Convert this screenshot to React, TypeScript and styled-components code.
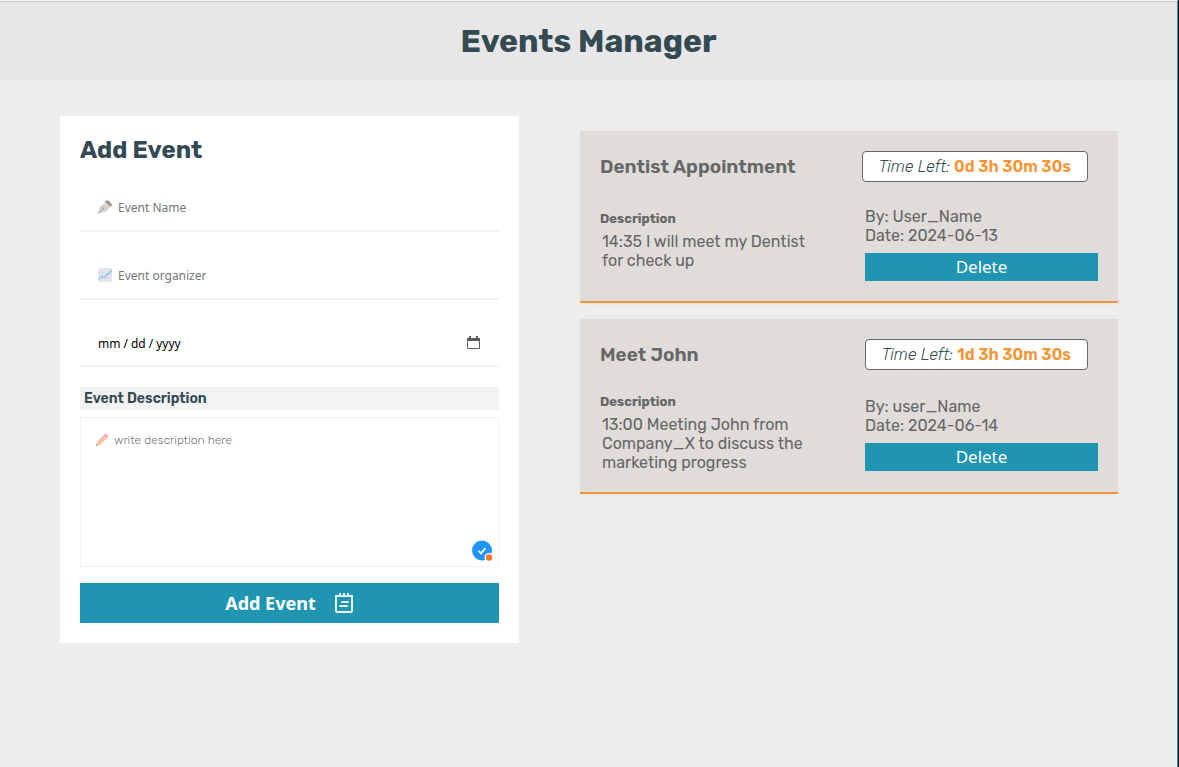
import React from "react";
import styled, { createGlobalStyle } from "styled-components";

const rubik = `Rubik, Inter, sans-serif`;
const noto = `"Noto Sans", sans-serif`;

const GlobalStyle = createGlobalStyle`
  *, *::before, *::after { box-sizing: border-box; }
  body {
    margin: 0;
    border-right: 1px solid #0c1216;
    background: #eee;
    font-family: ${rubik};
  }
  h1, h2, h3, h4, p { margin: 0; }
`;

const Page = styled.div`
  min-height: 100vh;
  border-top: 1px solid #fafafa;
  border-right: 1px solid #4b8ba0;
  background: #eee;
`;

const Header = styled.header`
  padding: 20px;
  border-top: 1px solid #c6c8c7;
  background: #e7e7e7;
  text-align: center;
`;

const PageTitle = styled.h1`
  color: #334a52;
  font-size: 32px;
  line-height: 38px;
  font-weight: 700;
`;

const Main = styled.main`
  display: grid;
  grid-template-columns: 459fr 538fr;
  gap: 61px;
  align-items: start;
  padding: 36px 59px 36px 60px;
`;

const FormCard = styled.form`
  display: flex;
  flex-direction: column;
  padding: 20px;
  background: #fff;
`;

const FormTitle = styled.h2`
  margin-bottom: 20px;
  color: #334a52;
  font-size: 24px;
  line-height: 28px;
  font-weight: 700;
`;

const Field = styled.label<{ $compact?: boolean }>`
  position: relative;
  display: flex;
  align-items: center;
  gap: 5px;
  height: ${(p) => (p.$compact ? 47 : 48)}px;
  margin-bottom: 20px;
  padding: 0 17px;
  border-bottom: 2px solid #f3f3f3;
`;

const TextInput = styled.input`
  flex: 1;
  min-width: 0;
  padding: 2px 0 0;
  border: 0;
  outline: 0;
  background: transparent;
  color: #000;
  font: 12px/18px ${noto};
  &::placeholder { color: #757575; opacity: 1; }
`;

const DateInput = styled(TextInput)`
  &::-webkit-datetime-edit-fields-wrapper { padding: 0; }
  &::-webkit-datetime-edit-text { padding: 0 2px; }
  &::-webkit-calendar-picker-indicator { opacity: 0; }
`;

const CalendarIcon = styled.svg`
  position: absolute;
  right: 18px;
  pointer-events: none;
`;

const DescriptionLabel = styled.label`
  margin-bottom: 7px;
  padding: 2px 4px;
  background: #f3f3f3;
  color: #334a52;
  font-size: 14px;
  line-height: 19px;
  font-weight: 600;
`;

const DescriptionBox = styled.div`
  position: relative;
  display: flex;
  align-items: flex-start;
  gap: 5px;
  height: 150px;
  margin-bottom: 16px;
  padding: 14px;
  border: 1px solid #f3f3f3;
`;

const PencilHolder = styled.span`
  display: flex;
  align-items: center;
  height: 16px;
`;

const TextArea = styled.textarea`
  flex: 1;
  align-self: stretch;
  padding: 0;
  border: 0;
  outline: 0;
  resize: none;
  background: transparent;
  font: 300 12px/16px ${rubik};
  &::placeholder { color: #757575; opacity: 1; }
`;

const CheckerBadge = styled.svg`
  position: absolute;
  right: 5px;
  bottom: 4px;
`;

const SubmitButton = styled.button`
  display: flex;
  align-items: center;
  justify-content: center;
  gap: 18px;
  height: 40px;
  border: 0;
  background: #2095b2;
  box-shadow: 0 2px 4px rgba(0, 0, 0, 0.05);
  color: #fff;
  font: 700 18px/24px ${noto};
`;

const EventList = styled.ul`
  display: flex;
  flex-direction: column;
  gap: 16px;
  margin: 15px 0 0;
  padding: 0;
  list-style: none;
`;

const EventCard = styled.li`
  display: grid;
  grid-template-columns: 1fr 233px;
  column-gap: 32px;
  align-items: center;
  padding: 20px;
  border-bottom: 2px solid #f79433;
  background: #e0dcd9;
  box-shadow: 0 0 10px rgba(0, 0, 0, 0.03);
  color: #666;
`;

const EventTop = styled.div`
  grid-column: 1 / -1;
  display: flex;
  justify-content: space-between;
  margin-bottom: 24px;
  padding-right: 10px;
`;

const EventTitle = styled.h3`
  font-size: 19px;
  line-height: 31px;
  font-weight: 600;
`;

const TimeLeft = styled.div`
  padding: 5px 16px;
  border: 1px solid #666;
  border-radius: 4px;
  background: #fff;
  color: #334a52;
  font-size: 16px;
  line-height: 19px;
  font-weight: 300;
  strong { color: #f79433; font-weight: 600; }
`;

const DescriptionColumn = styled.div`
  min-height: 65px;
  padding-right: 16px;
`;

const DescriptionHeading = styled.h4`
  margin-bottom: 5px;
  font-size: 13px;
  line-height: 16px;
  font-weight: 700;
`;

const DescriptionText = styled.p`
  padding-left: 2px;
  font-size: 16px;
  line-height: 19px;
`;

const Details = styled.div`
  display: flex;
  flex-direction: column;
  justify-content: flex-end;
  min-height: 75px;
  font-size: 16px;
  line-height: 19px;
`;

const DeleteButton = styled.button`
  height: 28px;
  margin-top: 8px;
  padding: 0;
  border: 0;
  background: #2095b2;
  color: #fff;
  font: 17px/22px ${noto};
`;

const events = [
  { title: "Dentist Appointment", left: "0d 3h 30m 30s", text: "14:35 I will meet my Dentist for check up", by: "User_Name", date: "2024-06-13" },
  { title: "Meet John", left: "1d 3h 30m 30s", text: "13:00 Meeting John from Company_X to discuss the marketing progress", by: "user_Name", date: "2024-06-14" },
];

const PenIcon = () => (
  <svg width="16" height="16" viewBox="0 0 16 16" aria-hidden="true">
    <path d="M.8 14.8 3 7.6 7.4 4.4l4.6 4.4-2.8 3.8Z" fill="#d3cfd9" />
    <path d="m.8 14.8 5-5" stroke="#a39dac" strokeWidth=".8" />
    <circle cx="6.2" cy="9.4" r="1" fill="#aaa3b3" />
    <path d="m6.8 4.1 1.6-1.6 5.2 5-1.5 1.9Z" fill="#f5d6b4" />
    <path d="m7.9 2.6 1.7-1.4c2.2.2 4.8 2.6 5.3 4.8l-1.4 2Z" fill="#9690a4" />
  </svg>
);

const ChartIcon = () => (
  <svg width="16" height="16" viewBox="0 0 16 16" aria-hidden="true">
    <rect x="1" y="1" width="14" height="14" rx="1.5" fill="#e8e4ed" />
    <path d="M1 5.5h14M1 10.5h14M5.5 1v14M10.5 1v14" stroke="#dcd7e3" strokeWidth=".5" />
    <path d="m1.5 12.5 3.8-3.3 2 1.3 3.2-4 1.5.3L14.5 3" fill="none" stroke="#90c8ee" strokeWidth="1.5" />
  </svg>
);

const PencilIcon = () => (
  <svg width="14" height="14" viewBox="0 0 14 14" aria-hidden="true">
    <path d="M1 13 2 9l6.8-7 3.2 3.2-6.8 6.6Z" fill="#fdbf99" />
    <path d="m8.8 2 .9-.9c1.5-1 4.3 1.6 3.3 3.3l-.9.9Z" fill="#f9a5ae" />
    <path d="m8 2.8.8-.8L12 5.2l-.8.8Z" fill="#d0cdd5" />
    <path d="m1 13 .5-1.7 1.3 1.2Z" fill="#8a8086" />
  </svg>
);

const NotesIcon = () => (
  <svg width="20" height="22" viewBox="0 0 20 22" fill="none" stroke="#e9f5f8" strokeWidth="2" aria-hidden="true">
    <path d="M2 4h16v15q0 1-1 1H3q-1 0-1-1Z" />
    <path d="M6 1v4M10 1v4M14 1v4" />
    <path d="M8 10h6M6 14h7" strokeLinecap="round" />
  </svg>
);

export default function App() {
  return (
    <>
      <GlobalStyle />
      <Page>
        <Header>
          <PageTitle>Events Manager</PageTitle>
        </Header>
        <Main>
          <FormCard>
            <FormTitle>Add Event</FormTitle>
            <Field>
              <PenIcon />
              <TextInput type="text" placeholder="Event Name" aria-label="Event Name" />
            </Field>
            <Field>
              <ChartIcon />
              <TextInput type="text" placeholder="Event organizer" aria-label="Event organizer" />
            </Field>
            <Field $compact>
              <DateInput type="date" aria-label="Event date" />
              <CalendarIcon width="15" height="14" viewBox="0 0 15 14" aria-hidden="true">
                <path d="M1.5 4.5h12v8h-12Z" fill="none" stroke="#5b5b5b" />
                <path d="M1 2h13v3H1ZM3 0h2v3H3ZM10 0h2v3h-2Z" fill="#5b5b5b" />
              </CalendarIcon>
            </Field>
            <DescriptionLabel htmlFor="description">Event Description</DescriptionLabel>
            <DescriptionBox>
              <PencilHolder><PencilIcon /></PencilHolder>
              <TextArea id="description" placeholder="write description here" />
              <CheckerBadge width="22" height="22" viewBox="0 0 22 22" aria-hidden="true">
                <circle cx="11" cy="10.5" r="10" fill="#2196f9" />
                <path d="m7.5 10.8 2.7 2.6L14.5 8" fill="none" stroke="#fff" strokeWidth="1.8" />
                <circle cx="18" cy="17.5" r="4.5" fill="#fff" />
                <circle cx="18" cy="17.5" r="3.2" fill="#f5791f" />
              </CheckerBadge>
            </DescriptionBox>
            <SubmitButton type="button">
              Add Event
              <NotesIcon />
            </SubmitButton>
          </FormCard>
          <EventList>
            {events.map((event) => (
              <EventCard key={event.title}>
                <EventTop>
                  <EventTitle>{event.title}</EventTitle>
                  <TimeLeft>
                    <em>Time Left:</em> <strong>{event.left}</strong>
                  </TimeLeft>
                </EventTop>
                <DescriptionColumn>
                  <DescriptionHeading>Description</DescriptionHeading>
                  <DescriptionText>{event.text}</DescriptionText>
                </DescriptionColumn>
                <Details>
                  <p>By: {event.by}</p>
                  <p>Date: {event.date}</p>
                  <DeleteButton type="button">Delete</DeleteButton>
                </Details>
              </EventCard>
            ))}
          </EventList>
        </Main>
      </Page>
    </>
  );
}
